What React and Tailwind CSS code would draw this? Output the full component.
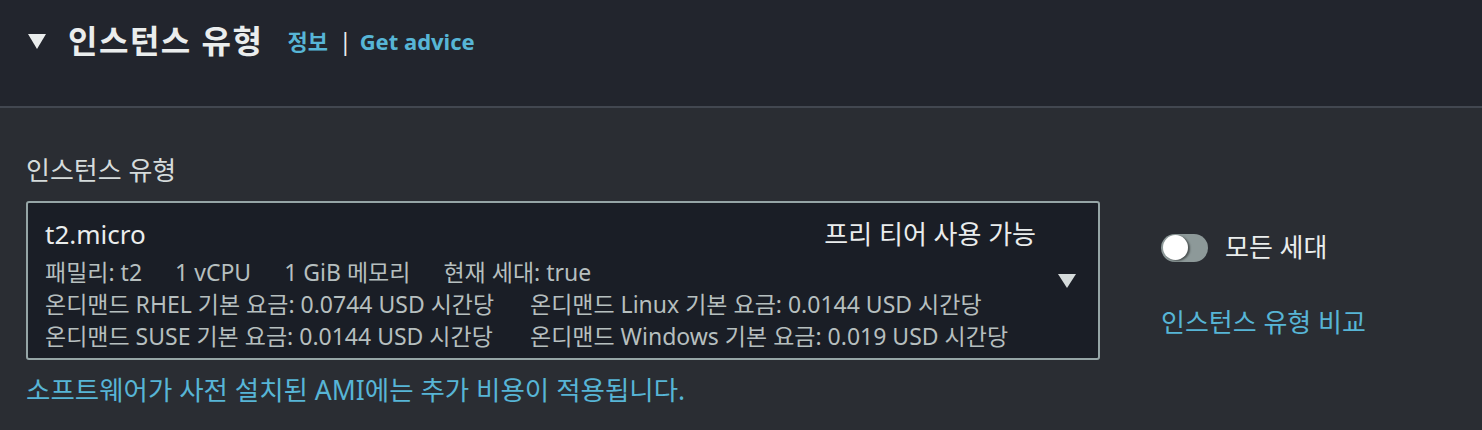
export default function App() {
  const font = { fontFamily: '"Noto Sans", "Noto Sans CJK KR", sans-serif' };
  return (
    <div className="w-[1482px] h-[430px] bg-[#2a2d33] overflow-hidden" style={font}>
      <div className="h-[108px] bg-[#22252d] border-b-2 border-[#424750] pl-[28px] pt-[20px]">
        <div className="flex items-center h-[42px]">
          <svg width="18" height="15" viewBox="0 0 18 15" className="shrink-0">
            <polygon points="0,0 18,0 9,15" fill="#eaeded" />
          </svg>
          <span className="ml-[22px] text-[32px] tracking-[1.5px] font-bold text-[#eaeded] leading-none">인스턴스 유형</span>
          <span className="ml-[24px] text-[22px] font-bold text-[#57b5d6] leading-none">정보</span>
          <span className="ml-[11px] text-[23px] text-[#eaeded] leading-none">|</span>
          <span className="ml-[8px] text-[22px] font-bold text-[#57b5d6] leading-none">Get advice</span>
        </div>
      </div>
      <div className="pl-[26px] pt-[47px]">
        <div className="text-[26px] leading-[30px] text-[#d5dbdb]">인스턴스 유형</div>
        <div className="flex mt-[16px]">
          <div className="w-[1074px] h-[159px] bg-[#1a1e26] border-2 border-[#95a5a6] rounded-[3px] flex">
            <div className="flex-1 pl-[17px] pt-[15px]">
              <div className="flex justify-between items-center h-[33px]">
                <span className="text-[26px] text-[#eaeded]">t2.micro</span>
                <span className="text-[26px] text-[#eaeded]">프리 티어 사용 가능</span>
              </div>
              <div className="mt-[5px] text-[23px] leading-[32px] text-[#b6bfbf]">
                <div className="flex gap-[33px]">
                  <span>패밀리: t2</span>
                  <span>1 vCPU</span>
                  <span>1 GiB 메모리</span>
                  <span>현재 세대: true</span>
                </div>
                <div className="grid grid-cols-[485px_auto]">
                  <span>온디맨드 RHEL 기본 요금: 0.0744 USD 시간당</span>
                  <span>온디맨드 Linux 기본 요금: 0.0144 USD 시간당</span>
                </div>
                <div className="grid grid-cols-[485px_auto]">
                  <span>온디맨드 SUSE 기본 요금: 0.0144 USD 시간당</span>
                  <span>온디맨드 Windows 기본 요금: 0.019 USD 시간당</span>
                </div>
              </div>
            </div>
            <div className="flex items-center pl-[22px] pr-[22px]">
              <svg width="18" height="14" viewBox="0 0 18 14">
                <polygon points="0,0 18,0 9,14" fill="#d5dbdb" />
              </svg>
            </div>
          </div>
          <div className="ml-[61px] pt-[27px]">
            <div className="flex items-center">
              <div className="w-[47px] h-[28px] rounded-full bg-[#8d9999] flex items-center pl-[2px]">
                <div className="w-[25px] h-[25px] rounded-full bg-white shadow-[2px_1px_2px_rgba(0,0,0,0.45)]" />
              </div>
              <span className="ml-[17px] text-[26px] text-[#eaeded]">모든 세대</span>
            </div>
            <div className="mt-[36px] text-[26px] text-[#57b5d6]">인스턴스 유형 비교</div>
          </div>
        </div>
        <div className="mt-[15px] text-[26.5px] leading-[30px] text-[#57b5d6]">소프트웨어가 사전 설치된 AMI에는 추가 비용이 적용됩니다.</div>
      </div>
    </div>
  );
}
